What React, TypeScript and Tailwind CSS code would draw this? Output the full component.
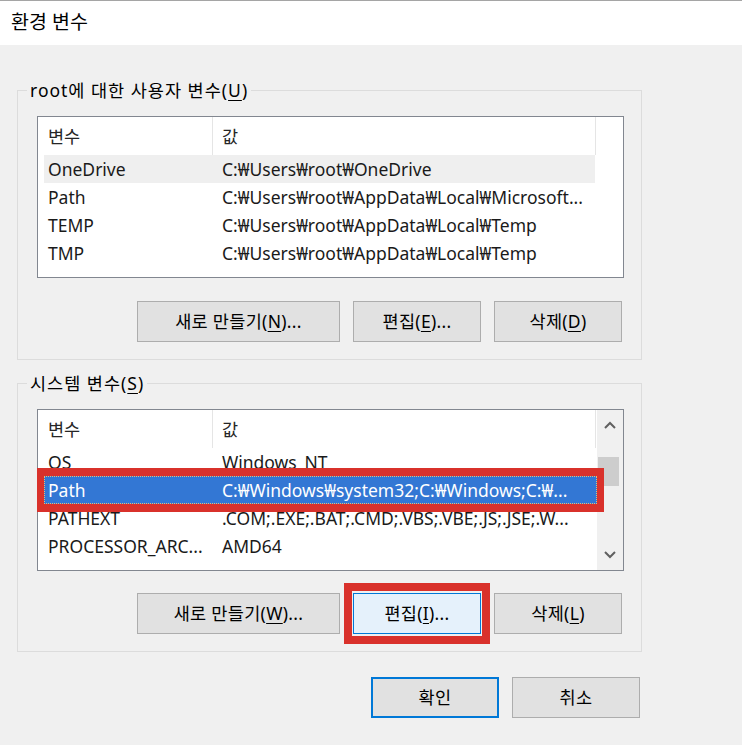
import React from 'react';

type Row = { name: string; value: string; hover?: boolean; selected?: boolean };

const userRows: Row[] = [
  { name: 'OneDrive', value: 'C:₩Users₩root₩OneDrive', hover: true },
  { name: 'Path', value: 'C:₩Users₩root₩AppData₩Local₩Microsoft...' },
  { name: 'TEMP', value: 'C:₩Users₩root₩AppData₩Local₩Temp' },
  { name: 'TMP', value: 'C:₩Users₩root₩AppData₩Local₩Temp' },
];

const systemRows: Row[] = [
  { name: 'OS', value: 'Windows_NT' },
  { name: 'Path', value: 'C:₩Windows₩system32;C:₩Windows;C:₩...', selected: true },
  { name: 'PATHEXT', value: '.COM;.EXE;.BAT;.CMD;.VBS;.VBE;.JS;.JSE;.W...' },
  { name: 'PROCESSOR_ARC...', value: 'AMD64' },
];

const Mn = ({ k }: { k: string }) => (
  <>
    (<span className="underline underline-offset-[3px]">{k}</span>)
  </>
);

const Chevron = ({ up }: { up?: boolean }) => (
  <svg width="12" height="8" viewBox="0 0 12 8" className={up ? '' : 'rotate-180'}>
    <polyline points="1,7 6,2 11,7" fill="none" stroke="#606060" strokeWidth="2" />
  </svg>
);

const Button = ({
  children,
  width = 'w-[128px]',
  variant = 'normal',
}: {
  children: React.ReactNode;
  width?: string;
  variant?: 'normal' | 'hover' | 'default';
}) => {
  const look =
    variant === 'hover'
      ? 'bg-[#e5f1fb] border border-[#0078d7]'
      : variant === 'default'
      ? 'bg-[#e1e1e1] border-2 border-[#0078d7]'
      : 'bg-[#e1e1e1] border border-[#adadad]';
  return (
    <div className={`${width} h-[41px] ${look} flex items-center justify-center tracking-[0.3px] text-black`}>
      {children}
    </div>
  );
};

const ListView = ({ rows, scroll }: { rows: Row[]; scroll?: boolean }) => (
  <div className="relative flex h-[162px] w-[587px] border border-[#828790] bg-white">
    <div className="w-[559px] shrink-0">
      <div className="flex h-[38px] text-[#262626]">
        <div className="flex w-[175px] items-center border-r border-[#e5e5e5] pl-[10px]">변수</div>
        <div className="flex w-[383px] items-center border-r border-[#e5e5e5] pl-[9px]">값</div>
      </div>
      {rows.map((r) => (
        <div
          key={r.name}
          className={`relative ml-[6px] flex h-[28px] items-center whitespace-nowrap ${
            r.selected ? 'w-[553px] bg-[#3377d4] text-white' : r.hover ? 'w-[551px] bg-[#efefef] text-[#1a1a1a]' : 'w-[551px] text-[#1a1a1a]'
          }`}
        >
          {r.selected && <span className="absolute inset-0 border border-dotted border-[#e9b877]" />}
          <div className="w-[168px] overflow-hidden pl-[4px]">{r.name}</div>
          <div className="flex-1 overflow-hidden pl-[10px]">{r.value}</div>
          {r.selected && (
            <span className="pointer-events-none absolute -inset-x-[7px] -inset-y-[8px] border-x-[7px] border-y-[8px] border-[#d9312b]" />
          )}
        </div>
      ))}
    </div>
    <div className="flex-1" />
    {scroll && (
      <div className="flex w-[26px] flex-col bg-[#f0f0f0]">
        <div className="flex h-[30px] items-center justify-center">
          <Chevron up />
        </div>
        <div className="ml-[1px] mt-[17px] h-[29px] w-[21px] bg-[#cdcdcd]" />
        <div className="flex-1" />
        <div className="flex h-[30px] items-center justify-center">
          <Chevron />
        </div>
      </div>
    )}
  </div>
);

export default function App() {
  return (
    <div className="h-[745px] w-[742px] overflow-hidden bg-[#f0f0f0] font-['Noto_Sans','Noto_Sans_CJK_KR',sans-serif] text-[17.5px] text-black">
      <div className="flex h-[45px] items-center border-t border-[#a5a5a5] bg-white pl-[11px] pb-[2px] text-[19.5px]">
        환경 변수
      </div>

      <fieldset className="ml-[17px] mt-[35px] w-[625px] border border-[#dcdcdc]">
        <legend className="ml-[9px] px-[3px] leading-[20px] tracking-[1px]">
          root에 대한 사용자 변수<Mn k="U" />
        </legend>
        <div className="pl-[19px] pr-[17px] pt-[16px] pb-[17px]">
          <ListView rows={userRows} />
          <div className="mt-[23px] flex justify-end gap-[13px] pr-[2px]">
            <Button width="w-[203px]">
              새로 만들기<Mn k="N" />...
            </Button>
            <Button>
              편집<Mn k="E" />...
            </Button>
            <Button>
              삭제<Mn k="D" />
            </Button>
          </div>
        </div>
      </fieldset>

      <fieldset className="ml-[17px] mt-[13px] w-[625px] border border-[#dcdcdc]">
        <legend className="ml-[9px] px-[3px] leading-[20px] tracking-[1px]">
          시스템 변수<Mn k="S" />
        </legend>
        <div className="pl-[19px] pr-[17px] pt-[16px] pb-[17px]">
          <ListView rows={systemRows} scroll />
          <div className="mt-[22px] flex justify-end gap-[13px] pr-[2px]">
            <Button width="w-[203px]">
              새로 만들기<Mn k="W" />...
            </Button>
            <div className="relative">
              <Button variant="hover">
                편집<Mn k="I" />...
              </Button>
              <span className="pointer-events-none absolute -left-[9px] -right-[9px] -top-[10px] -bottom-[10px] border-[8px] border-[#d9312b]" />
            </div>
            <Button>
              삭제<Mn k="L" />
            </Button>
          </div>
        </div>
      </fieldset>

      <div className="mt-[25px] flex w-[640px] justify-end gap-[13px]">
        <Button variant="default">확인</Button>
        <Button>취소</Button>
      </div>
    </div>
  );
}
